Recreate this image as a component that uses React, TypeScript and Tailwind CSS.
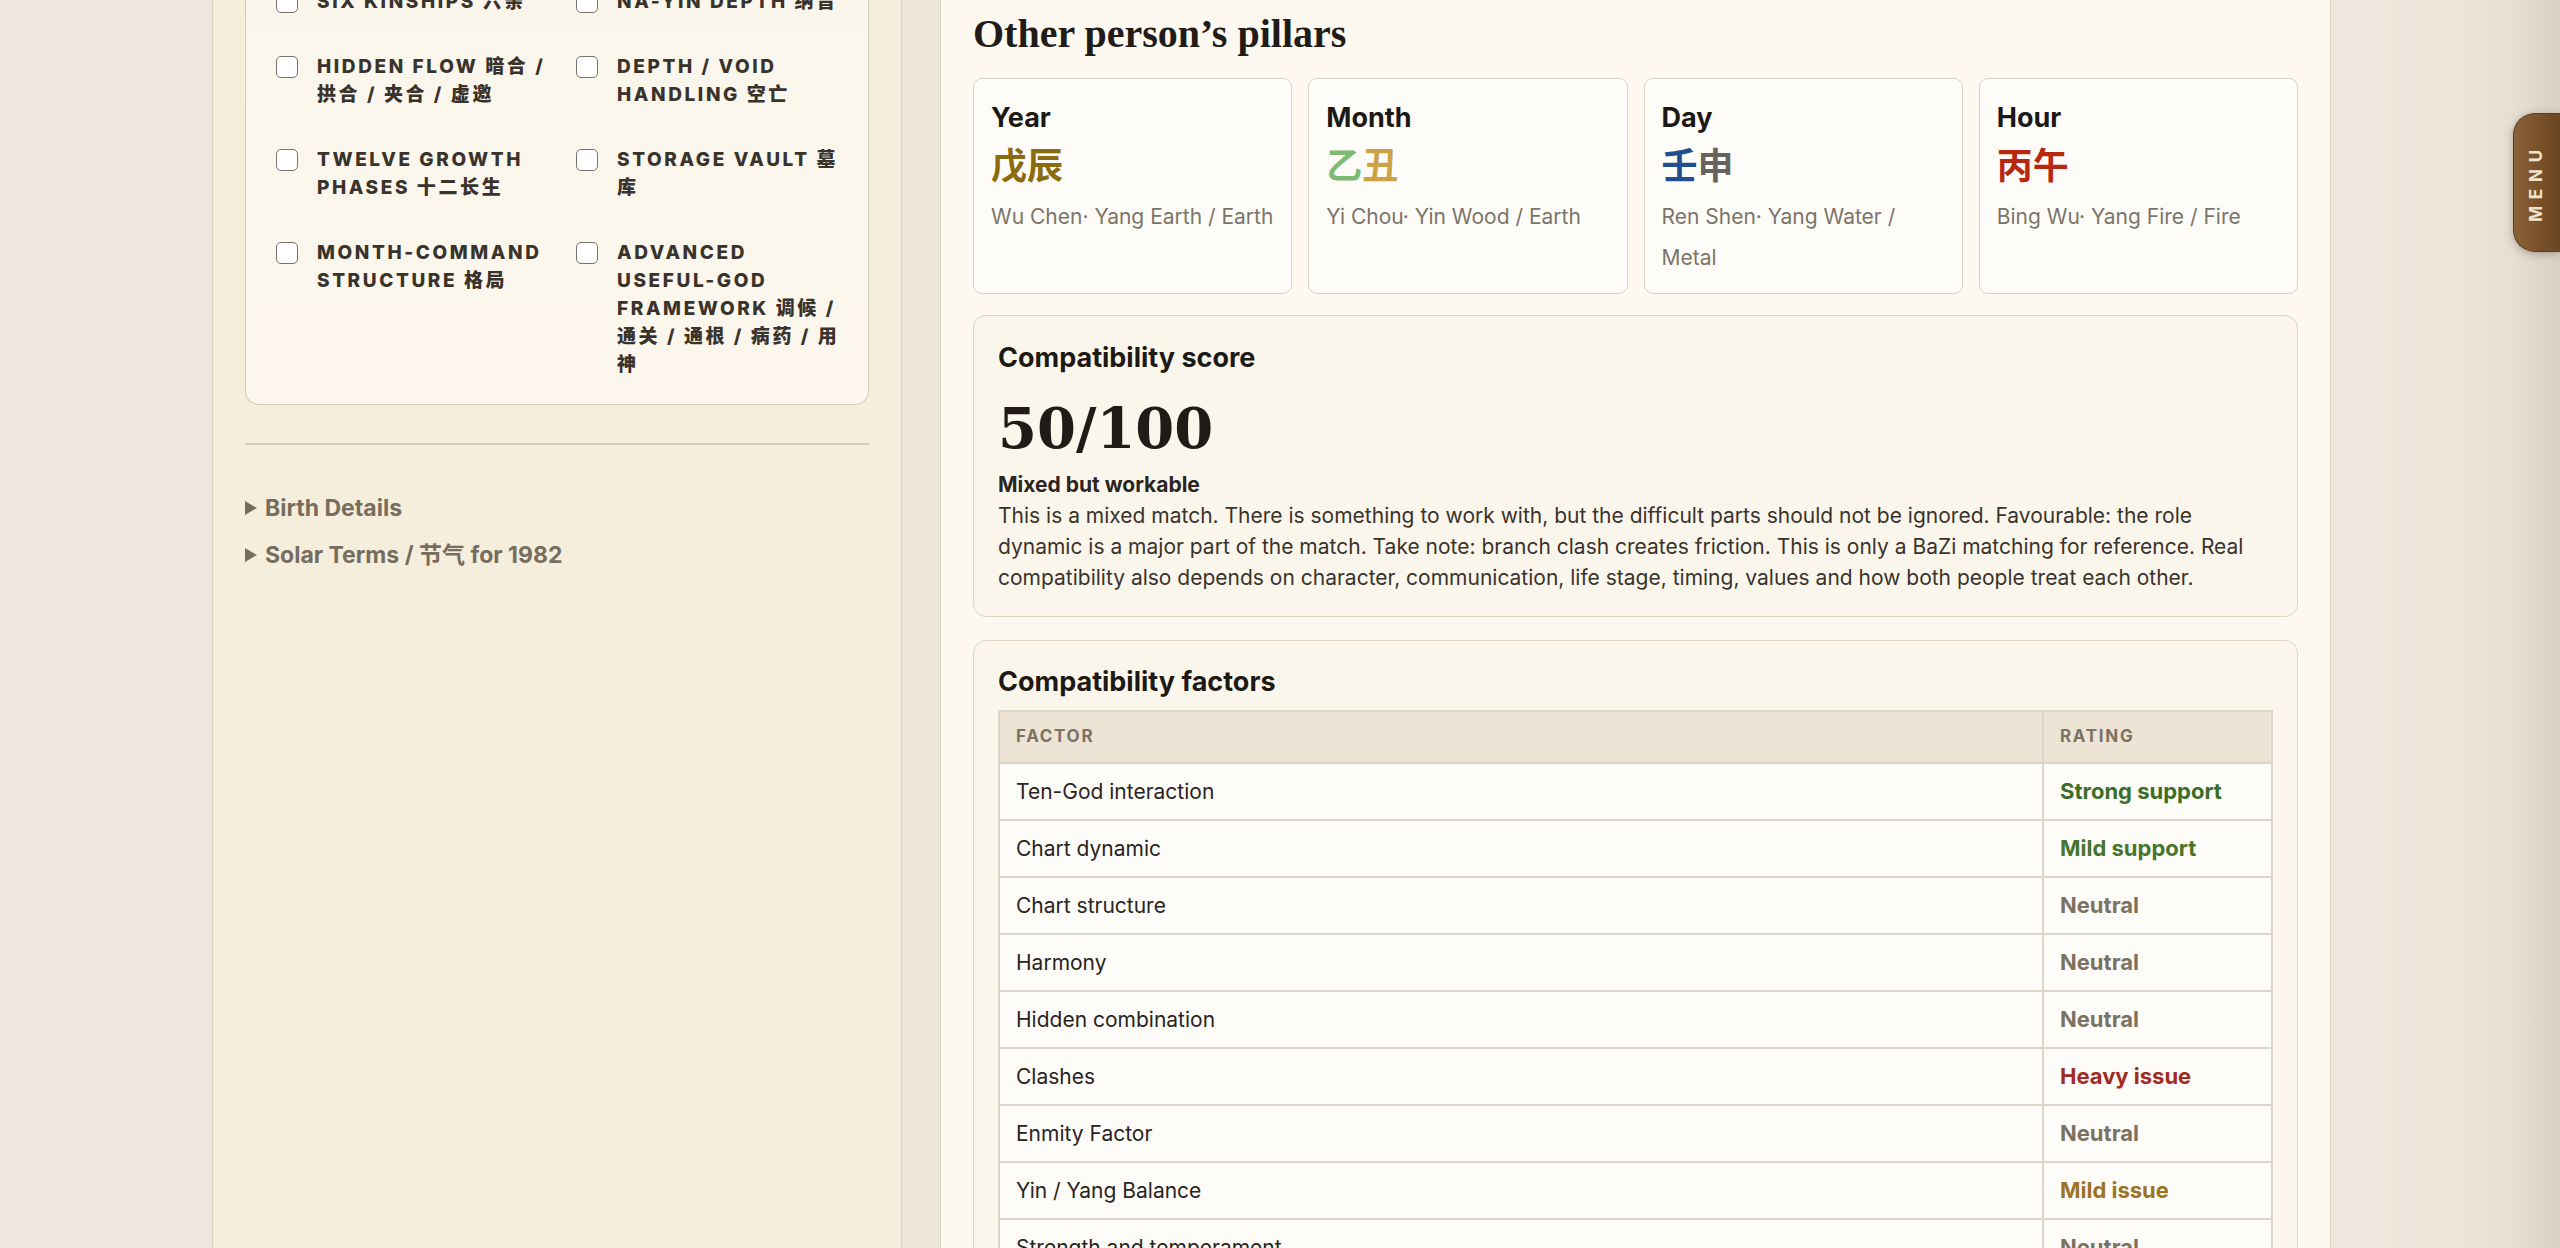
import React from "react";

const checkItems: string[][][] = [
  [["SIX KINSHIPS 六亲"], ["NA-YIN DEPTH 纳音"]],
  [
    ["HIDDEN FLOW 暗合 /", "拱合 / 夹合 / 虚邀"],
    ["DEPTH / VOID", "HANDLING 空亡"],
  ],
  [
    ["TWELVE GROWTH", "PHASES 十二长生"],
    ["STORAGE VAULT 墓", "库"],
  ],
  [
    ["MONTH-COMMAND", "STRUCTURE 格局"],
    ["ADVANCED", "USEFUL-GOD", "FRAMEWORK 调候 /", "通关 / 通根 / 病药 / 用", "神"],
  ],
];

type Rating = "strong" | "mild" | "neutral" | "heavy" | "mildIssue";

const factors: { name: string; rating: string; kind: Rating }[] = [
  { name: "Ten-God interaction", rating: "Strong support", kind: "strong" },
  { name: "Chart dynamic", rating: "Mild support", kind: "mild" },
  { name: "Chart structure", rating: "Neutral", kind: "neutral" },
  { name: "Harmony", rating: "Neutral", kind: "neutral" },
  { name: "Hidden combination", rating: "Neutral", kind: "neutral" },
  { name: "Clashes", rating: "Heavy issue", kind: "heavy" },
  { name: "Enmity Factor", rating: "Neutral", kind: "neutral" },
  { name: "Yin / Yang Balance", rating: "Mild issue", kind: "mildIssue" },
  { name: "Strength and temperament", rating: "Neutral", kind: "neutral" },
  { name: "Element support", rating: "Neutral", kind: "neutral" },
];

const ratingClass: Record<Rating, string> = {
  strong: "text-[#3b6e26]",
  mild: "text-[#46762c]",
  neutral: "text-[#7b7262]",
  heavy: "text-[#a02b20]",
  mildIssue: "text-[#9b7423]",
};

function CheckItem({ lines }: { lines: string[] }) {
  return (
    <div className="flex items-start gap-[19px]">
      <span className="mt-[3px] block h-[22px] w-[22px] shrink-0 rounded-[5px] border-[1.5px] border-[#77726b] bg-white" />
      <div className="text-[19px] font-extrabold uppercase leading-[28px] tracking-[2.6px] text-[#39332c]">
        {lines.map((l, i) => (
          <div key={i} className="whitespace-nowrap">
            {l}
          </div>
        ))}
      </div>
    </div>
  );
}

function Pillar({
  label,
  chars,
  lines,
}: {
  label: string;
  chars: { c: string; color: string }[];
  lines: string[];
}) {
  return (
    <div className="rounded-[9px] border border-[#dbd2c3] bg-[#fefcf8] px-[17px] pb-[15px] pt-[22px]">
      <div className="text-[27px] font-bold leading-[34px] text-[#1c1915]">{label}</div>
      <div className="mt-[7px] flex text-[36px] font-bold leading-[48px]">
        {chars.map((ch, i) => (
          <span key={i} className={ch.color}>
            {ch.c}
          </span>
        ))}
      </div>
      <div className="mt-[6px] text-[21px] leading-[41px] text-[#7b7569]">
        {lines.map((l, i) => (
          <div key={i} className="whitespace-nowrap">
            {l}
          </div>
        ))}
      </div>
    </div>
  );
}

function Tri() {
  return (
    <svg width="12" height="14" viewBox="0 0 12 14" className="shrink-0">
      <polygon points="0,0 12,7 0,14" fill="#766d5e" />
    </svg>
  );
}

export default function App() {
  return (
    <div className="relative flex h-[1248px] w-[2560px] overflow-hidden bg-[#eee8de] font-[Inter,'Noto_Sans_CJK_SC',sans-serif]">
      {/* left background strip */}
      <div className="w-[212px] shrink-0 bg-[linear-gradient(to_right,#efe9df,#ece6dc)]" />

      {/* sidebar */}
      <aside className="flex w-[690px] shrink-0 flex-col border-x border-[#ddd2bf] bg-[#f6eedd] px-[32px]">
        <div className="rounded-b-[14px] border border-t-0 border-[#d6cbb8] bg-[linear-gradient(to_bottom,#fbf6ec,#fcf6ec)] pb-[25px] pl-[30px] pr-[20px]">
          <div className="-mt-[12px] grid grid-cols-[280px_262px] gap-x-[20px] gap-y-[37px]">
            {checkItems.map((row, r) =>
              row.map((lines, c) => <CheckItem key={`${r}-${c}`} lines={lines} />)
            )}
          </div>
        </div>
        <div className="mt-[38px] h-[2px] bg-[#d5ccbc]" />
        <div className="mt-[48px] flex flex-col gap-[17px] text-[23px] font-bold leading-[30px] text-[#766d5e]">
          <div className="flex items-center gap-[8px]">
            <Tri />
            <span>Birth Details</span>
          </div>
          <div className="flex items-center gap-[8px]">
            <Tri />
            <span>Solar Terms / 节气 for 1982</span>
          </div>
        </div>
      </aside>

      {/* gap */}
      <div className="w-[38px] shrink-0 bg-[#ebe5da]" />

      {/* main panel */}
      <main className="w-[1391px] shrink-0 border-x border-[#ddd3c2] bg-[#fdf8f0] px-[32px] pt-[12px]">
        <h2 className="font-['Liberation_Serif',serif] text-[40px] font-bold leading-[44px] text-[#211c17]">
          Other person’s pillars
        </h2>

        <div className="mt-[22px] grid grid-cols-4 gap-[16px]">
          <Pillar
            label="Year"
            chars={[
              { c: "戊", color: "text-[#8c6a0e]" },
              { c: "辰", color: "text-[#8c6a0e]" },
            ]}
            lines={["Wu Chen· Yang Earth / Earth"]}
          />
          <Pillar
            label="Month"
            chars={[
              { c: "乙", color: "text-[#7dba72]" },
              { c: "丑", color: "text-[#c9a346]" },
            ]}
            lines={["Yi Chou· Yin Wood / Earth"]}
          />
          <Pillar
            label="Day"
            chars={[
              { c: "壬", color: "text-[#1f4f8f]" },
              { c: "申", color: "text-[#67635e]" },
            ]}
            lines={["Ren Shen· Yang Water /", "Metal"]}
          />
          <Pillar
            label="Hour"
            chars={[
              { c: "丙", color: "text-[#b7290f]" },
              { c: "午", color: "text-[#b7290f]" },
            ]}
            lines={["Bing Wu· Yang Fire / Fire"]}
          />
        </div>

        {/* score card */}
        <section className="mt-[21px] rounded-[13px] border border-[#dcd3c3] bg-[#fbf6ec] px-[24px] pb-[23px] pt-[26px]">
          <h3 className="text-[27px] font-bold leading-[32px] text-[#1d1915]">Compatibility score</h3>
          <div className="mt-[26px] font-['DejaVu_Serif',serif] text-[56px] font-bold leading-[56px] text-[#201b16]">
            50/100
          </div>
          <div className="mt-[16px] text-[21px] font-bold leading-[26px] text-[#2a251f]">Mixed but workable</div>
          <p className="mt-[2px] text-[21px] leading-[31px] text-[#39332c]">
            This is a mixed match. There is something to work with, but the difficult parts should not be ignored.
            Favourable: the role dynamic is a major part of the match. Take note: branch clash creates friction. This
            is only a BaZi matching for reference. Real compatibility also depends on character, communication, life
            stage, timing, values and how both people treat each other.
          </p>
        </section>

        {/* factors card */}
        <section className="mt-[23px] rounded-[13px] border border-[#dcd3c3] bg-[#fbf6ec] px-[24px] pb-[24px] pt-[25px]">
          <h3 className="text-[27px] font-bold leading-[32px] text-[#1d1915]">Compatibility factors</h3>
          <table className="mt-[12px] w-full border-collapse border-2 border-[#ddd5c7]">
            <thead>
              <tr className="h-[52px] bg-[#ede4d5]">
                <th className="border-2 border-[#ddd5c7] px-[16px] text-left text-[17px] font-bold tracking-[0.1em] text-[#7b7262]">
                  FACTOR
                </th>
                <th className="w-[229px] border-2 border-[#ddd5c7] px-[16px] text-left text-[17px] font-bold tracking-[0.1em] text-[#7b7262]">
                  RATING
                </th>
              </tr>
            </thead>
            <tbody>
              {factors.map((f) => (
                <tr key={f.name} className="h-[57px] bg-[#fefcf8]">
                  <td className="border-2 border-[#ddd5c7] px-[16px] text-[21px] text-[#29241e]">{f.name}</td>
                  <td
                    className={`border-2 border-[#ddd5c7] px-[16px] text-[22px] font-bold ${ratingClass[f.kind]}`}
                  >
                    {f.rating}
                  </td>
                </tr>
              ))}
            </tbody>
          </table>
        </section>
      </main>

      {/* right background */}
      <div className="flex-1 bg-[linear-gradient(to_right,#ede7dd_0%,#ebe5da_55%,#e6dfd3_80%,#d9d1c4_100%)]" />

      {/* menu tab */}
      <button className="absolute right-0 top-[113px] flex h-[139px] w-[47px] items-center justify-center rounded-l-[22px] border border-r-0 border-[#5c3d21] bg-[linear-gradient(to_right,#8b6238,#765029_60%,#6a4624)] shadow-[0_2px_8px_rgba(60,40,20,0.35)]">
        <span className="rotate-180 text-[17px] font-bold tracking-[0.4em] text-[#f2e4cc] [writing-mode:vertical-rl]">
          MENU
        </span>
      </button>
    </div>
  );
}
